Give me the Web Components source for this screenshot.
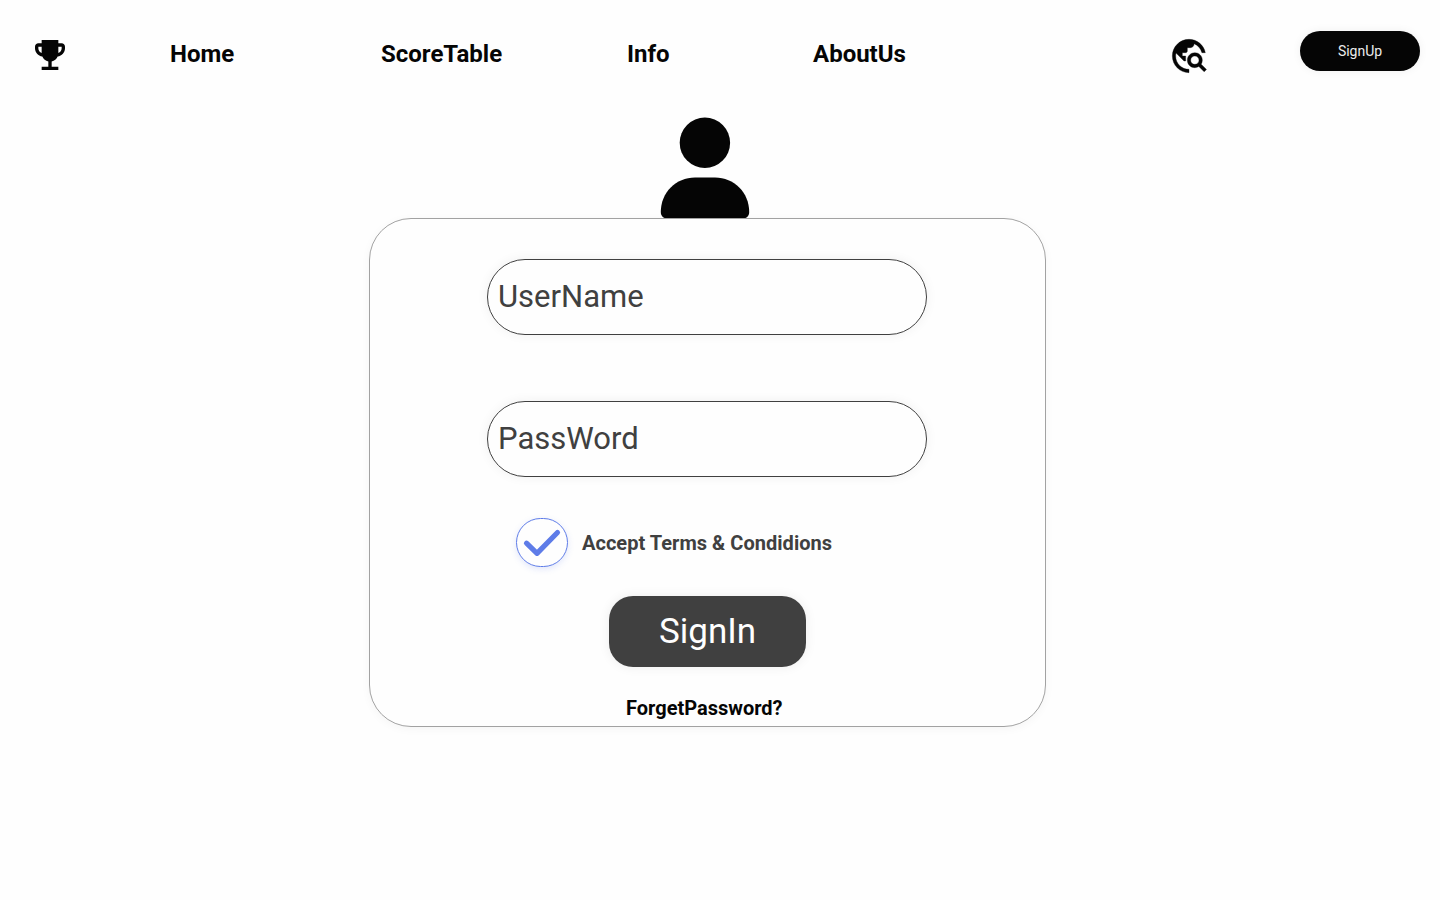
<!DOCTYPE html>
<html lang="en">
<head>
<meta charset="utf-8">
<title>Sign in</title>
<style>
body { margin: 0; background: #fefefe; font-family: Roboto, "Liberation Sans", sans-serif; color: #050505; overflow: hidden; }
</style>
</head>
<body>
<sign-in-page></sign-in-page>
<script>
const define = (name, html) => customElements.define(name, class extends HTMLElement {
  constructor() {
    super();
    const t = document.createElement('template');
    t.innerHTML = html;
    this.attachShadow({ mode: 'open' }).append(t.content.cloneNode(true));
  }
});

define('trophy-icon', `
<style>:host{display:block;width:40px;height:40px}svg{display:block}</style>
<svg width="40" height="40" viewBox="0 0 24 24" fill="currentColor"><path d="M19 5h-2V3H7v2H5c-1.1 0-2 .9-2 2v1c0 2.55 1.92 4.63 4.39 4.94.63 1.5 1.98 2.63 3.61 2.96V19H7v2h10v-2h-4v-3.1c1.63-.33 2.98-1.46 3.61-2.96C19.08 12.63 21 10.55 21 8V7c0-1.1-.9-2-2-2zM5 8V7h2v3.82C5.84 10.4 5 9.3 5 8zm14 0c0 1.3-.84 2.4-2 2.82V7h2v1z"/></svg>`);

define('explore-icon', `
<style>:host{display:block;width:40px;height:40px}svg{display:block}</style>
<svg width="40" height="40" viewBox="0 0 24 24" fill="currentColor" stroke="currentColor" stroke-width=".2"><path d="M19.3 16.9c.4-.7.7-1.5.7-2.4 0-2.5-2-4.5-4.5-4.5S11 12 11 14.5s2 4.5 4.5 4.5c.9 0 1.7-.3 2.4-.7l3.2 3.2 1.4-1.4-3.2-3.2zm-3.8.1c-1.4 0-2.5-1.1-2.5-2.5s1.1-2.5 2.5-2.5 2.5 1.1 2.5 2.5-1.1 2.5-2.5 2.5zM12 20v2C6.48 22 2 17.52 2 12S6.48 2 12 2c4.84 0 8.87 3.44 9.8 8h-2.07c-.64-2.46-2.4-4.47-4.73-5.41V5c0 1.1-.9 2-2 2h-2v2c0 .55-.45 1-1 1H8v2h2v3H9l-4.79-4.79C4.08 10.79 4 11.38 4 12c0 4.41 3.59 8 8 8z"/></svg>`);

define('user-avatar', `
<style>:host{display:block;width:90px;height:102px}svg{display:block}</style>
<svg width="90" height="102" viewBox="660 117 90 102" fill="currentColor"><circle cx="704.9" cy="142.8" r="25.2"/><path d="M660.8 212C660.8 192.500 676 177.500 695 177.500H715C734 177.500 749.200 192.500 749.200 212C749.200 216 746.500 218.500 743 218.500H667C663.500 218.500 660.800 216 660.800 212Z"/></svg>`);

define('nav-link', `
<style>:host{display:block;font-size:24px;line-height:28px;font-weight:700;white-space:nowrap}</style>
<slot></slot>`);

define('pill-button', `
<style>:host{display:flex;align-items:center;justify-content:center;box-sizing:border-box;width:120px;height:40px;border-radius:20px;background:#050505;color:#ececec;font-size:14px;box-shadow:0 0 10px rgba(0,0,0,.06)}</style>
<slot></slot>`);

define('site-header', `
<style>
:host{display:flex;align-items:flex-start;box-sizing:border-box;height:117px;padding:31px 20px 0 30px}
trophy-icon{margin:4px 0 0}
nav{display:grid;grid-template-columns:211px 246px 186px auto;margin:9px 0 0 100px}
explore-icon{margin:5px 91px 0 auto}
</style>
<trophy-icon></trophy-icon>
<nav><nav-link>Home</nav-link><nav-link>ScoreTable</nav-link><nav-link>Info</nav-link><nav-link>AboutUs</nav-link></nav>
<explore-icon></explore-icon>
<pill-button>SignUp</pill-button>`);

define('text-field', `
<style>:host{display:flex;align-items:center;box-sizing:border-box;width:440px;height:76px;padding:0 10px 1px;border:1px solid #404040;border-radius:38px;color:#404040;font-size:31px;box-shadow:0 0 12px rgba(0,0,0,.06)}</style>
<slot></slot>`);

define('terms-check', `
<style>
:host{display:flex;align-items:center;gap:14px;color:#404040;font-size:20px;line-height:24px;font-weight:700;letter-spacing:.03px;white-space:nowrap}
.box{box-sizing:border-box;width:52px;height:49px;border:1px solid #5e7ce8;border-radius:25px;box-shadow:0 2px 6px rgba(94,124,232,.18)}
svg{display:block}
</style>
<div class="box"><svg width="50" height="47" viewBox="517 519 50 47" fill="none" stroke="#5e7ce8" stroke-width="5.2" stroke-linecap="round" stroke-linejoin="round"><path d="M526.500 543.200 537 553.300 557.500 532.500"/></svg></div>
<span><slot></slot></span>`);

define('sign-in-button', `
<style>:host{display:flex;align-items:center;justify-content:center;width:197px;height:71px;border-radius:24px;background:#404040;color:#fefefe;font-size:35px;box-shadow:0 0 12px rgba(0,0,0,.07)}</style>
<slot></slot>`);

define('sign-in-card', `
<style>
:host{display:flex;flex-direction:column;align-items:flex-start;box-sizing:border-box;width:677px;height:509px;padding:40px 0 0 117px;border:1px solid #a2a2a2;border-radius:42px;box-shadow:0 2px 10px rgba(0,0,0,.04)}
.password{margin-top:66px}
terms-check{margin:41px 0 0 29px}
sign-in-button{margin:29px 0 0 122px}
.forgot{margin:29px 0 0 139px;font-size:20px;line-height:24px;font-weight:700}
</style>
<text-field>UserName</text-field>
<text-field class="password">PassWord</text-field>
<terms-check>Accept Terms &amp; Condidions</terms-check>
<sign-in-button>SignIn</sign-in-button>
<div class="forgot">ForgetPassword?</div>`);

define('sign-in-page', `
<style>
:host{display:flex;flex-direction:column;height:900px}
user-avatar{margin-left:660px}
sign-in-card{margin:-1px 0 0 369px}
</style>
<site-header></site-header>
<user-avatar></user-avatar>
<sign-in-card></sign-in-card>`);
</script>
</body>
</html>
